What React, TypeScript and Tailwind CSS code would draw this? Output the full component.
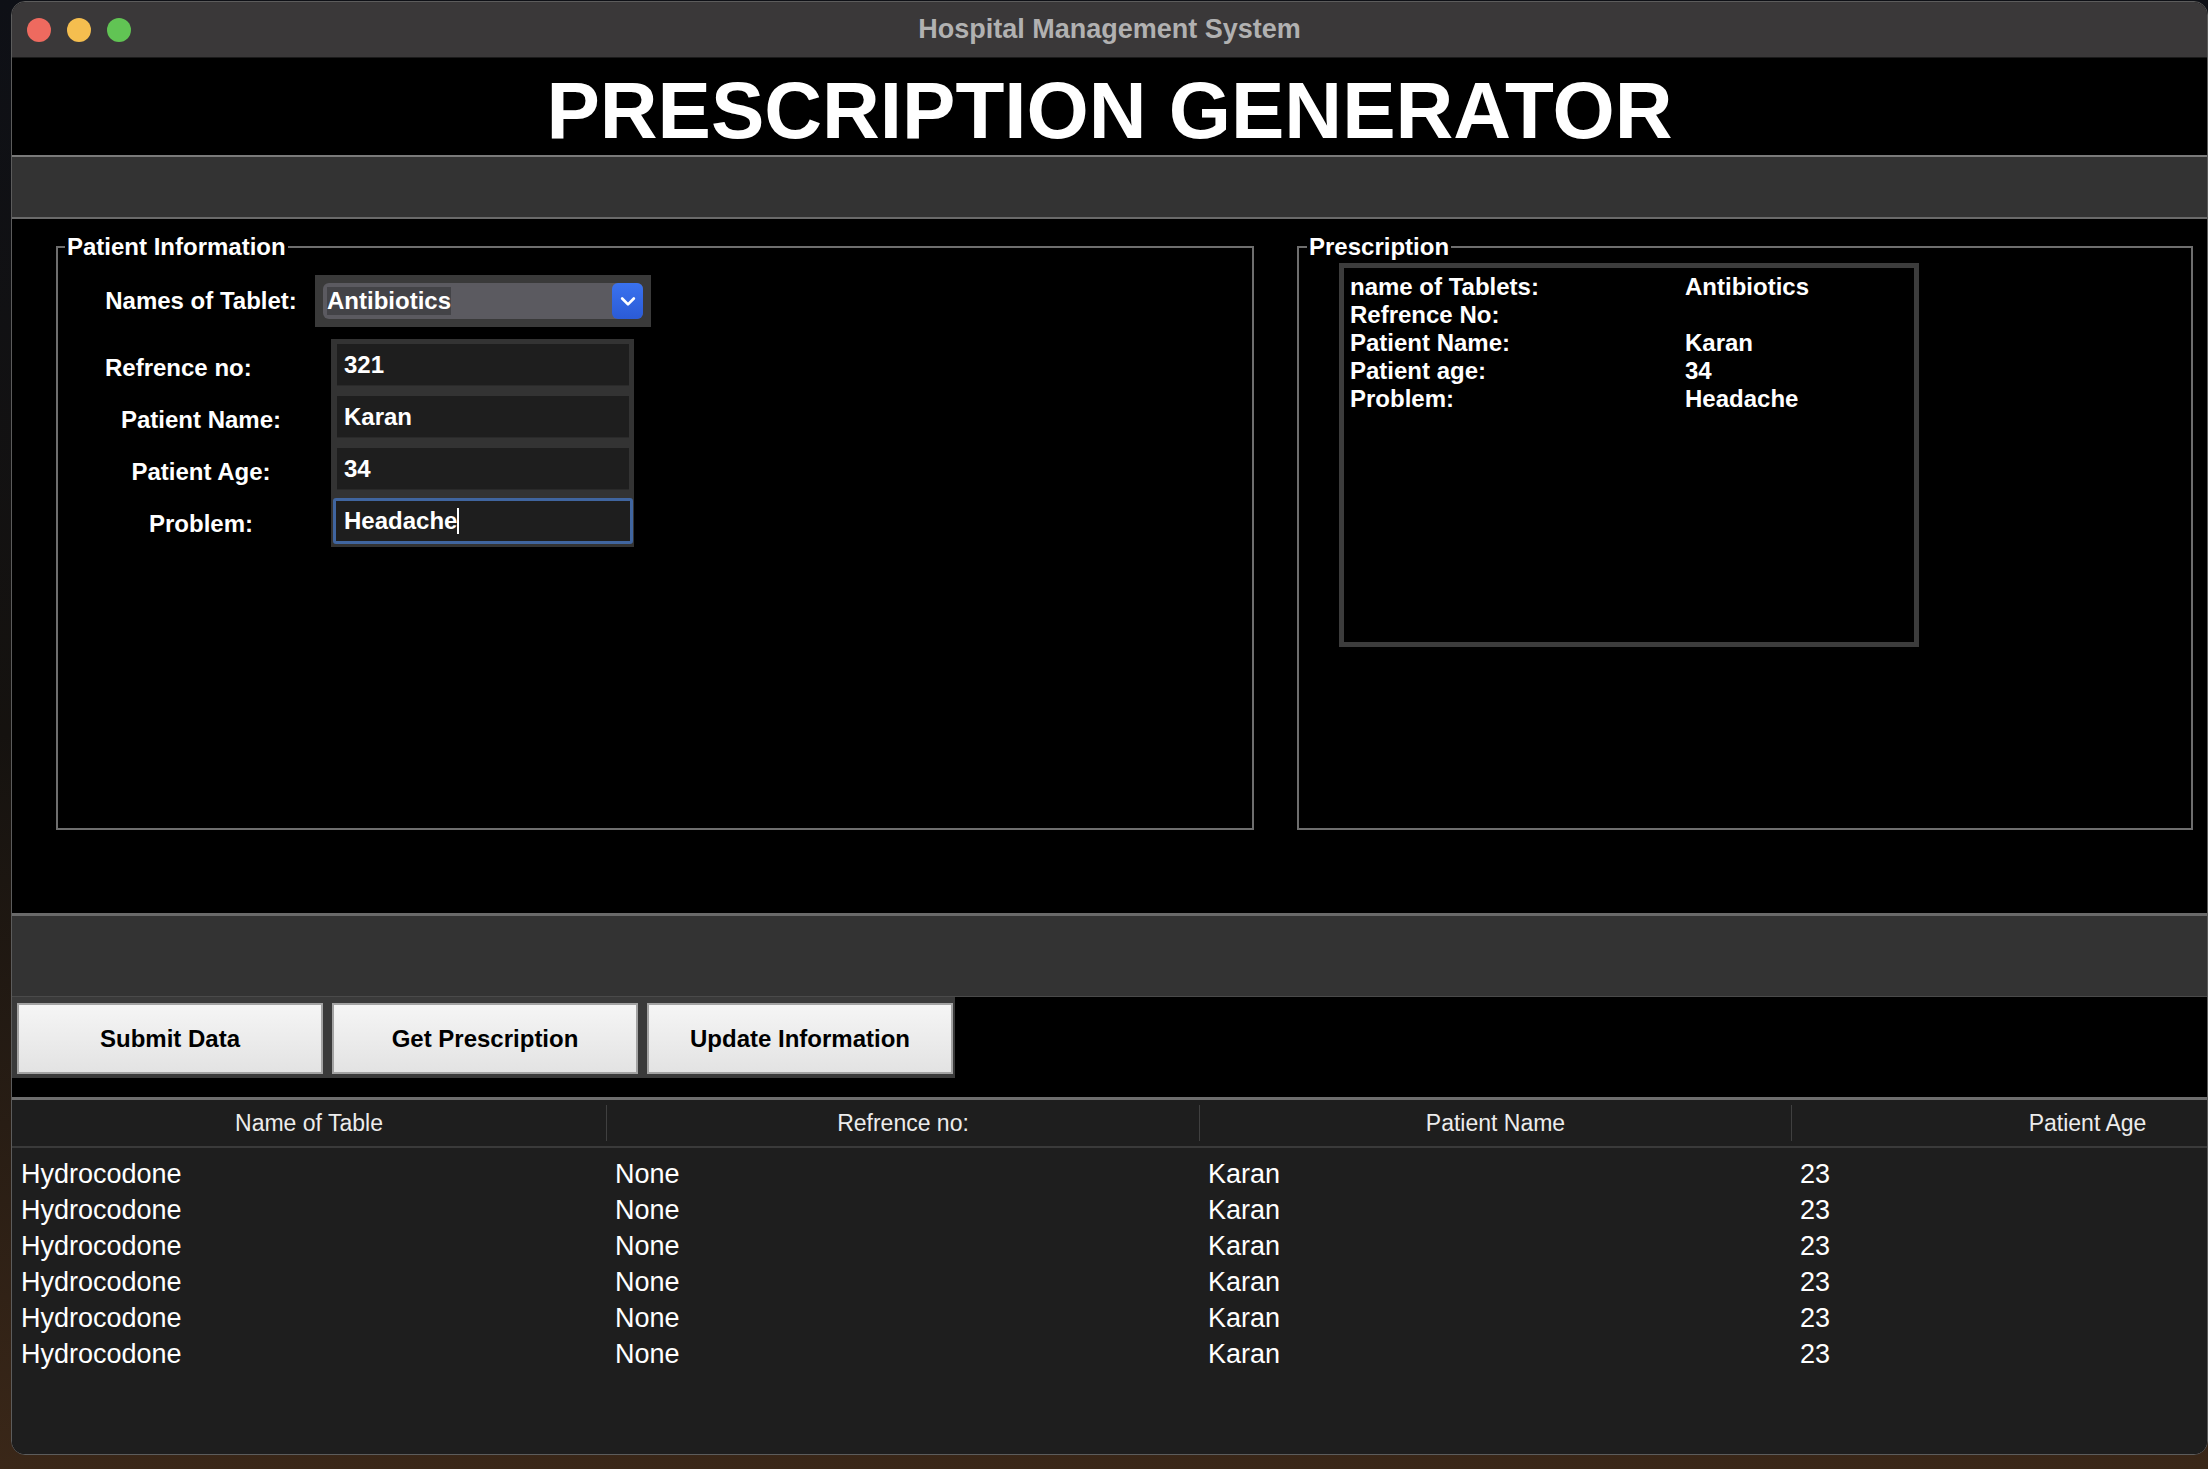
import React from "react";

type Row = {
  tablet: string;
  ref: string;
  name: string;
  age: string;
};

const rows: Row[] = Array.from({ length: 6 }, () => ({
  tablet: "Hydrocodone",
  ref: "None",
  name: "Karan",
  age: "23",
}));

const prescription: [string, string][] = [
  ["name of Tablets:", "Antibiotics"],
  ["Refrence No:", ""],
  ["Patient Name:", "Karan"],
  ["Patient age:", "34"],
  ["Problem:", "Headache"],
];

function Entry({ value, focused }: { value: string; focused?: boolean }) {
  if (focused) {
    return (
      <div className="-mx-[4px] -my-[2px] h-[46px] flex items-center bg-[#1e1e1e] border-[3px] border-[#40659f] rounded-[3px] pl-[8px]">
        <span>{value}</span>
        <span className="inline-block w-[2px] h-[26px] bg-white" />
      </div>
    );
  }
  return (
    <div className="h-[42px] flex items-center bg-[#1e1e1e] border-b border-[#2a2a2a] pl-[7px]">
      {value}
    </div>
  );
}

export default function App() {
  return (
    <div className="w-[2208px] h-[1469px] overflow-hidden bg-gradient-to-b from-[#0e1016] via-[#15120f] to-[#3a2718] font-['Liberation_Sans',Arial,sans-serif] text-white">
      <div className="ml-[11px] mt-[1px] w-[2197px] h-[1454px] flex flex-col rounded-[14px] overflow-hidden border border-[#5c5c5c] bg-black">
        {/* title bar */}
        <div className="h-[56px] shrink-0 grid grid-cols-[1fr_auto_1fr] items-center bg-[#3a3839] border-b border-[#1a1a1a]">
          <div className="flex items-center gap-[16px] pl-[15px]">
            <span className="w-[24px] h-[24px] rounded-full bg-[#ee6a5f]" />
            <span className="w-[24px] h-[24px] rounded-full bg-[#f5be4f]" />
            <span className="w-[24px] h-[24px] rounded-full bg-[#61c454]" />
          </div>
          <div className="text-[27px] font-bold text-[#b1b1b1]">Hospital Management System</div>
          <div />
        </div>

        {/* heading */}
        <div className="h-[97px] shrink-0 flex items-center justify-center pt-[8px]">
          <h1 className="text-[80px] leading-none font-bold">PRESCRIPTION GENERATOR</h1>
        </div>
        <div className="h-[62px] shrink-0 bg-[#333333] border-t-2 border-[#7a7a7a]" />

        {/* main frame */}
        <div className="h-[696px] shrink-0 border-t-2 border-[#6a6a6a] flex gap-[43px] pl-[44px] pt-[14px]">
          <fieldset className="w-[1198px] h-[597px] border-2 border-[#6e6e6e] p-0">
            <legend className="ml-[7px] px-[2px] text-[24px] leading-[28px] font-bold">Patient Information</legend>
            <div className="pl-[47px] pt-[14px] text-[24px] font-bold">
              <div className="flex items-center">
                <div className="w-[192px] text-center">Names of Tablet:</div>
                <div className="ml-[18px] w-[336px] h-[52px] bg-[#3a3a3a] p-[8px]">
                  <div className="h-full flex items-center justify-between rounded-[6px] bg-[#5b5a60] pl-[4px]">
                    <span className="bg-[#434347] leading-[28px]">Antibiotics</span>
                    <span className="w-[31px] h-full rounded-[6px] bg-gradient-to-b from-[#3a72ef] to-[#2b5bd6] flex items-center justify-center">
                      <svg width="20" height="20" viewBox="0 0 24 24" fill="none" stroke="white" strokeWidth="3.2" strokeLinecap="round" strokeLinejoin="round">
                        <polyline points="5,9 12,16 19,9" />
                      </svg>
                    </span>
                  </div>
                </div>
              </div>

              <div className="flex mt-[12px]">
                <div className="w-[192px] pt-[8px] flex flex-col gap-[10px]">
                  <div className="h-[42px] flex items-center">Refrence no:</div>
                  <div className="h-[42px] flex items-center justify-center">Patient Name:</div>
                  <div className="h-[42px] flex items-center justify-center">Patient Age:</div>
                  <div className="h-[42px] flex items-center justify-center">Problem:</div>
                </div>
                <div className="ml-[34px] w-[303px] bg-[#333333] pl-[6px] pr-[5px] py-[5px] flex flex-col gap-[10px]">
                  <Entry value="321" />
                  <Entry value="Karan" />
                  <Entry value="34" />
                  <Entry value="Headache" focused />
                </div>
              </div>
            </div>
          </fieldset>

          <fieldset className="w-[896px] h-[597px] border-2 border-[#6e6e6e] p-0">
            <legend className="ml-[8px] px-[2px] text-[24px] leading-[28px] font-bold">Prescription</legend>
            <div className="ml-[40px] mt-[2px] w-[580px] h-[384px] border-[5px] border-[#3c3c3c] pl-[6px] pt-[5px]">
              <div className="grid grid-cols-[335px_1fr] text-[24px] leading-[28px] font-bold">
                {prescription.map(([label, value]) => (
                  <React.Fragment key={label}>
                    <div>{label}</div>
                    <div>{value}</div>
                  </React.Fragment>
                ))}
              </div>
            </div>
          </fieldset>
        </div>

        <div className="h-[84px] shrink-0 bg-[#333333] border-t-[3px] border-[#6a6a6a] border-b border-b-[#4a4a4a]" />

        {/* buttons */}
        <div className="h-[81px] shrink-0 flex">
          <div className="w-[943px] bg-[#3a3a3a] flex gap-[9px] pl-[5px] pt-[6px] pb-[4px]">
            {["Submit Data", "Get Prescription", "Update Information"].map((b) => (
              <button
                key={b}
                className="w-[306px] h-[71px] bg-gradient-to-b from-[#f5f5f5] to-[#e3e3e3] border-2 border-[#a3a3a3] text-black text-[24px] font-bold"
              >
                {b}
              </button>
            ))}
          </div>
        </div>
        <div className="h-[19px] shrink-0" />

        {/* table */}
        <div className="flex-1 bg-[#1e1e1e] border-t-[3px] border-[#6e6e6e] overflow-hidden">
          <div className="h-[48px] grid grid-cols-[594px_593px_592px_592px] items-center border-b-2 border-[#3a3a3a] text-[23px] text-[#ececec]">
            <div className="h-[36px] flex items-center justify-center">Name of Table</div>
            <div className="h-[36px] flex items-center justify-center border-l border-[#404040]">Refrence no:</div>
            <div className="h-[36px] flex items-center justify-center border-l border-[#404040]">Patient Name</div>
            <div className="h-[36px] flex items-center justify-center border-l border-[#404040]">Patient Age</div>
          </div>
          <div className="pt-[8px] text-[27px] leading-[36px]">
            {rows.map((r, i) => (
              <div key={i} className="grid grid-cols-[594px_593px_592px_592px]">
                <div className="pl-[9px]">{r.tablet}</div>
                <div className="pl-[9px]">{r.ref}</div>
                <div className="pl-[9px]">{r.name}</div>
                <div className="pl-[9px]">{r.age}</div>
              </div>
            ))}
          </div>
        </div>
      </div>
    </div>
  );
}
